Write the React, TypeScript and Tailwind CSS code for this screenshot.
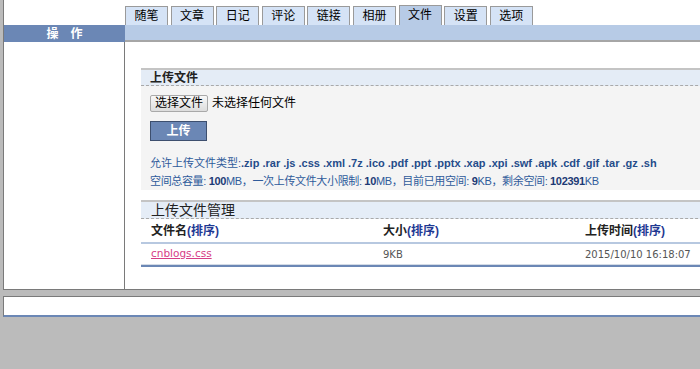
import React from 'react';

const tabs = ['随笔', '文章', '日记', '评论', '链接', '相册', '文件', '设置', '选项'];
const font = { fontFamily: '"Liberation Sans", "Noto Sans CJK SC", sans-serif' };

const App: React.FC = () => {
  return (
    <div className="min-h-screen w-full overflow-hidden bg-[#bbbbbb] pl-[3px]" style={font}>
      {/* main box */}
      <div className="w-[760px] h-[290px] bg-white border-l border-b border-[#7a7a7a] grid grid-cols-[121px_1fr] grid-rows-[25px_17px_1fr]">
        <div />
        <div className="flex items-end gap-[2.6px]">
          {tabs.map(t => (
            <div
              key={t}
              className={`w-[43px] flex items-center justify-center text-[12px] leading-none text-black border-t border-l border-r border-[#9a9a9a] ${t === '文件' ? 'h-[20px] bg-[#b7cbe6] pb-[1px]' : 'h-[19px] bg-[#d5e3f6]'}`}
            >
              {t}
            </div>
          ))}
        </div>

        <div className="bg-[#6b87b5] text-white text-[12px] font-bold flex items-center justify-center tracking-[12px] pl-[12px]">
          操作
        </div>
        <div className="bg-[#b7cbe6] border-b-2 border-[#a6a6a6]" />

        <div className="border-r border-[#7a7a7a]" />
        <div className="pl-[16px] pt-[26px]">
          {/* upload section */}
          <div className="h-[2px] bg-[#c4c4c4]" />
          <div className="bg-[#e4ecf6] h-[16px] border-b border-dashed border-[#a9a9a9] flex items-center pl-[9px] text-[12px] font-bold text-[#222]">
            上传文件
          </div>
          <div className="bg-[#f4f4f4] h-[104px] pl-[9px] pt-[8px]">
            <div className="flex items-center gap-[4px] text-[12px]">
              <button className="h-[17px] px-[4px] border border-[#a9a9a9] rounded-[2px] bg-gradient-to-b from-[#f8f8f8] to-[#dddddd] text-[12px] leading-none text-black">
                选择文件
              </button>
              <span className="text-black">未选择任何文件</span>
            </div>
            <button className="mt-[9px] w-[57px] h-[20px] bg-[#6b87b5] border border-[#3d4f6e] text-white text-[12px] font-bold leading-none">
              上传
            </button>
            <div className="mt-[12px] text-[11px] leading-[18px] text-[#2f5b9b]">
              <div>
                允许上传文件类型:<b className="text-[#254c8a]">.zip .rar .js .css .xml .7z .ico .pdf .ppt .pptx .xap .xpi .swf .apk .cdf .gif .tar .gz .sh</b>
              </div>
              <div className="tracking-[-0.35px]">
                空间总容量: <b className="text-[#1d3a75]">100</b>MB，一次上传文件大小限制: <b className="text-[#1d3a75]">10</b>MB，目前已用空间: <b className="text-[#1d3a75]">9</b>KB，剩余空间: <b className="text-[#1d3a75]">102391</b>KB
              </div>
            </div>
          </div>

          {/* manage section */}
          <div className="mt-[10px] h-[2px] bg-[#c4c4c4]" />
          <div className="bg-[#e5edf7] h-[17px] border-b border-dashed border-[#a9a9a9] flex items-center pl-[10px] text-[14px] text-[#222]">
            上传文件管理
          </div>
          <div className="flex h-[25px] items-center border-b-2 border-[#b7c8e0] text-[12px] font-bold text-[#222]">
            <div className="w-[242px] pl-[10px]">文件名<span className="text-[#1f3a93]">(排序)</span></div>
            <div className="w-[202px]">大小<span className="text-[#1f3a93]">(排序)</span></div>
            <div>上传时间<span className="text-[#1f3a93]">(排序)</span></div>
          </div>
          <div className="flex h-[21px] items-center border-b border-[#d3dbe6] text-[11px] text-[#555]" style={{ fontFamily: '"DejaVu Sans", "Noto Sans CJK SC", sans-serif' }}>
            <div className="w-[242px] pl-[10px]">
              <a href="#" className="text-[#d63c86] underline text-[10.5px]">cnblogs.css</a>
            </div>
            <div className="w-[202px] text-[10px]">9KB</div>
            <div className="text-[10px]">2015/10/10 16:18:07</div>
          </div>
          <div className="h-[2px] bg-[#6b87b5]" />
        </div>
      </div>

      {/* footer */}
      <div className="mt-[6px] w-[760px] h-[21px] bg-white border-t border-l border-[#7a7a7a] border-b-2 border-b-[#6b87b5]" />
    </div>
  );
};

export default App;
